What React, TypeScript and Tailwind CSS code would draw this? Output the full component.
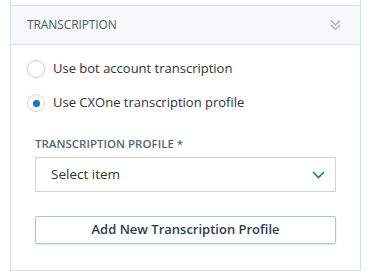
import React from 'react';

export default function App() {
  return (
    <div
      className="w-[371px] h-[277px] bg-white overflow-hidden"
      style={{ fontFamily: '"Open Sans", sans-serif' }}
    >
      <div className="ml-[10px] w-[351px] border-x border-[#d8e0e7]">
        <div className="h-[5px]" />
        {/* Header */}
        <div className="h-[40px] border-y border-[#d8e0e7] bg-[#f6f8fa] flex items-center justify-between pl-[16px] pr-[19px]">
          <span className="text-[12px] font-medium tracking-[-0.1px] text-[#4a5d6e]">TRANSCRIPTION</span>
          <svg width="11" height="12" viewBox="0 0 11 12" fill="none" stroke="#a3acb4" strokeWidth="1.2">
            <path d="M1 1.5 L5.5 6 L10 1.5" />
            <path d="M1 6 L5.5 10.5 L10 6" />
          </svg>
        </div>
        {/* Body */}
        <div className="pt-[14px] pb-[26px]">
          <div className="flex flex-col gap-[14px] pl-[16px]">
            <label className="flex items-center gap-[8px] h-[20px]">
              <span className="w-[18px] h-[18px] rounded-full border border-[#d3d3d3] bg-white" />
              <span className="text-[13px] text-[#333]">Use bot account transcription</span>
            </label>
            <label className="flex items-center gap-[8px] h-[20px]">
              <span className="w-[18px] h-[18px] rounded-full border border-[#d3d3d3] bg-white flex items-center justify-center">
                <span className="w-[7px] h-[7px] rounded-full bg-[#0b78c5]" />
              </span>
              <span className="text-[13px] text-[#333]">Use CXOne transcription profile</span>
            </label>
          </div>
          <div className="px-[24px] mt-[23px]">
            <div className="text-[11.5px] font-semibold text-[#53667a] leading-[16px]">TRANSCRIPTION PROFILE *</div>
            <div className="mt-[5px] h-[35px] border border-[#d3d3d3] flex items-center justify-between pl-[15px] pr-[10px]">
              <span className="text-[13.5px] text-[#333]">Select item</span>
              <svg width="13" height="8" viewBox="0 0 13 8" fill="none" stroke="#0b78c5" strokeWidth="1.6">
                <path d="M1 1 L6.5 6.5 L12 1" />
              </svg>
            </div>
            <button className="mt-[24px] w-full h-[28px] border border-[#aac6d8] rounded-[2px] bg-white shadow-[0_1px_2px_rgba(0,0,0,0.12)] text-[13px] font-semibold text-[#2d3e4f] flex items-center justify-center">
              Add New Transcription Profile
            </button>
          </div>
        </div>
      </div>
      <div className="ml-[10px] w-[351px] border-t border-[#d8e0e7]" />
    </div>
  );
}
